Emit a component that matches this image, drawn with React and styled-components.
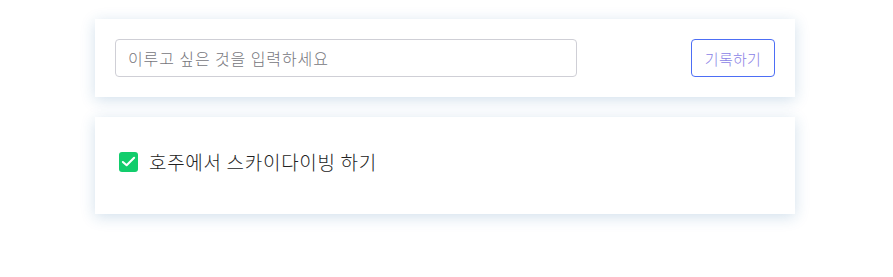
import React, { useState } from 'react'
import styled, { createGlobalStyle } from 'styled-components'

const GlobalStyle = createGlobalStyle`
  html, body {
    margin: 0;
    background: #fff;
    min-height: 277px;
    font-family: "Noto Sans CJK KR", "Noto Sans", sans-serif;
  }
`;

const Page = styled.div`
  width: 700px;
  padding: 19px 0 40px 95px;
  display: flex;
  flex-direction: column;
  gap: 20px;
`;

const Card = styled.div`
  background: #fff;
  box-shadow: 0 3px 14px rgba(30, 100, 160, 0.2);
  display: flex;
  align-items: center;
  padding: ${props => props.$pad};
  min-height: ${props => props.$height};
  box-sizing: border-box;
`;

const Form = styled.form`
  display: flex;
  align-items: center;
  justify-content: space-between;
  width: 100%;
`;

const Input = styled.input`
  width: 462px;
  height: 38px;
  box-sizing: border-box;
  border: 1px solid #cfcfd6;
  border-radius: 4px;
  padding: 0 12px;
  font-family: inherit;
  font-size: 16px;
  font-weight: 300;
  letter-spacing: 0.9px;
  color: #333;
  outline: none;
  &::placeholder {
    color: #76767c;
  }
`;

const Button = styled.button`
  width: 84px;
  height: 38px;
  border: 1px solid #4d6ef5;
  border-radius: 4px;
  background: #fff;
  color: #8a7fe6;
  font-family: inherit;
  font-size: 15px;
  font-weight: 300;
  letter-spacing: 0.3px;
  cursor: pointer;
`;

const Item = styled.label`
  display: flex;
  align-items: center;
  gap: 11px;
  font-size: 19px;
  font-weight: 300;
  letter-spacing: 0.7px;
  color: #222;
  cursor: pointer;
`;

const Box = styled.span`
  width: 19px;
  height: 20px;
  border-radius: 3px;
  background: ${props => (props.$checked ? '#12cd6c' : '#fff')};
  border: ${props => (props.$checked ? 'none' : '1px solid #bbb')};
  display: flex;
  align-items: center;
  justify-content: center;
  flex-shrink: 0;
`;

const App = () => {
  const [checked, setChecked] = useState(true);
  return (
    <>
      <GlobalStyle />
      <Page>
        <Card $pad="0 20px" $height="78px">
          <Form onSubmit={e => e.preventDefault()}>
            <Input placeholder="이루고 싶은 것을 입력하세요" />
            <Button type="submit">기록하기</Button>
          </Form>
        </Card>
        <Card $pad="0 24px 8px" $height="97px">
          <Item onClick={() => setChecked(!checked)}>
            <Box $checked={checked}>
              {checked && (
                <svg width="15" height="15" viewBox="0 0 16 16" fill="none" stroke="#fff" strokeWidth="2.2" strokeLinecap="round" strokeLinejoin="round">
                  <polyline points="2 8.5 6 12 14 4" />
                </svg>
              )}
            </Box>
            호주에서 스카이다이빙 하기
          </Item>
        </Card>
      </Page>
    </>
  );
}

export default App
